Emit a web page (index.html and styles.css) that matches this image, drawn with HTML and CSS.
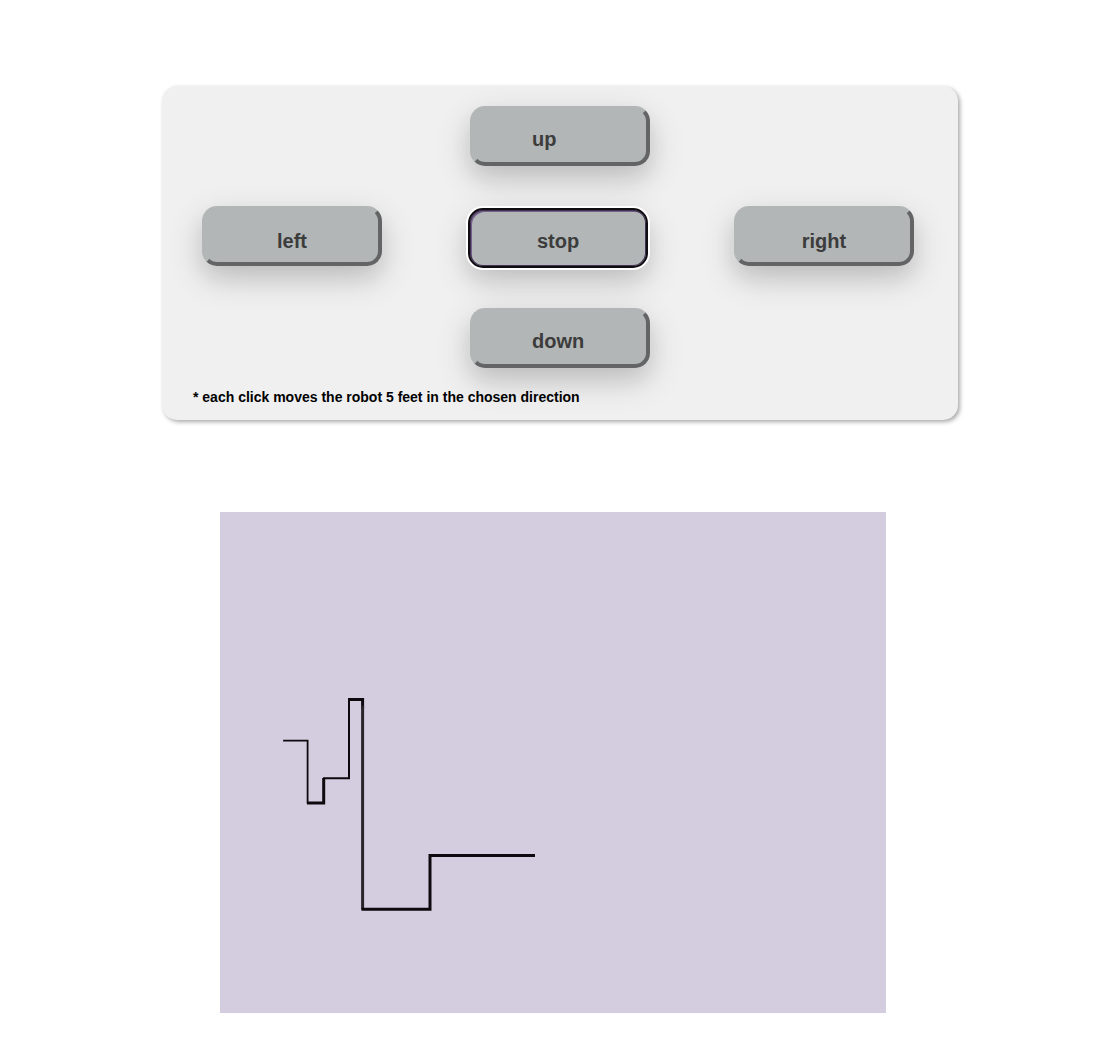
FILE: index.html
```html
<!DOCTYPE html>
<html lang="en">
<head>
  <meta charset="utf-8">
  <meta name="viewport" content="width=device-width, initial-scale=1">
  <title>Robot control</title>
  <link rel="stylesheet" href="styles.css">
</head>
<body>
  <main class="page">
    <div class="controls">
      <section class="panel" aria-label="Robot controls">
        <div class="pad">
          <button type="button" class="btn btn-vertical up">up</button>
          <button type="button" class="btn btn-side left">left</button>
          <button type="button" class="btn stop">stop</button>
          <button type="button" class="btn btn-side right">right</button>
          <button type="button" class="btn btn-vertical down">down</button>
        </div>
        <p class="note">* each click moves the robot 5 feet in the chosen direction</p>
      </section>
    </div>
    <svg class="map" viewBox="0 0 666 501" role="img" aria-label="Path of the robot">
      <g fill="none" stroke="#0c0a0e" stroke-linecap="square">
        <path stroke-width="1.8" d="M64 228.7H87.6V290.5"/>
        <path stroke-width="3" d="M88.5 291H103.7V267.5"/>
        <path stroke-width="2" d="M104 266.3H129V188"/>
        <path stroke-width="3" d="M129.5 187.5H142.6V195"/>
        <path stroke-width="3" stroke="#28262b" d="M142.6 195V396"/>
        <path stroke-width="3" d="M143 397.3H210V343.5H313.5"/>
      </g>
    </svg>
  </main>
</body>
</html>
```
FILE: styles.css
```css
* {
  box-sizing: border-box;
}

body {
  margin: 0;
  background: #fff;
  font-family: "Liberation Sans", Arial, sans-serif;
}

.page {
  padding: 86px 1px 44px 0;
}

.controls {
  padding-left: 14px;
}

.panel {
  max-width: 796px;
  margin: 0 auto;
  padding: 20px 44px 14px 40px;
  border-radius: 15px;
  background: #f0f0f0;
  box-shadow: 2px 2px 4px #aaa;
}

.pad {
  display: grid;
  grid-template-columns: repeat(3, 180px);
  grid-template-areas:
    ". up ."
    "left stop right"
    ". down .";
  justify-content: space-between;
  row-gap: 40px;
}

.up { grid-area: up; }
.left { grid-area: left; }
.stop { grid-area: stop; }
.right { grid-area: right; }
.down { grid-area: down; }

.btn {
  width: 180px;
  height: 60px;
  padding: 6px 0 0;
  border: 4px solid #636466;
  border-top-color: #b2b6b6;
  border-left-color: #b2b6b6;
  border-radius: 15px;
  background: #b2b6b6;
  box-shadow: 0 12px 20px rgba(0, 0, 0, 0.08), 0 12px 36px rgba(0, 0, 0, 0.16);
  color: #3c3c3c;
  font: bold 20px/24px "Liberation Sans", Arial, sans-serif;
}

.btn-side {
  padding-top: 10px;
}

.btn-vertical {
  margin-left: 2px;
  padding-left: 58px;
  text-align: left;
}

.stop {
  margin-top: 2px;
  border: 2px solid #100d12;
  box-shadow: 0 0 0 2px #fff, inset 0 0 0 1px #3f3150, inset 2px 2px #75608a,
    0 12px 20px rgba(0, 0, 0, 0.08), 0 12px 36px rgba(0, 0, 0, 0.16);
}

.note {
  margin: 20px 0 0 -9px;
  color: #000;
  font-size: 14px;
  font-weight: bold;
  line-height: 18px;
}

.map {
  display: block;
  width: 100%;
  max-width: 666px;
  margin: 92px auto 0;
  background: #d4ccdf;
}
```
